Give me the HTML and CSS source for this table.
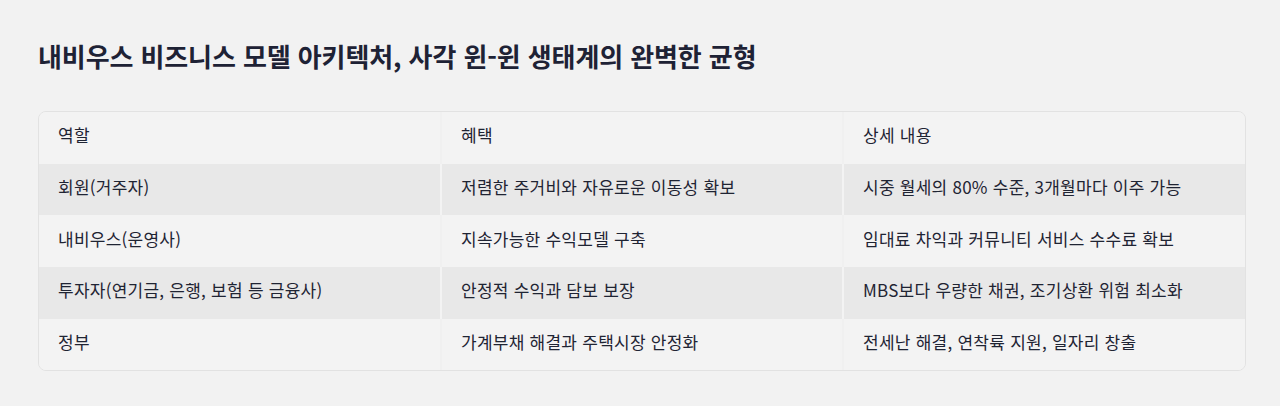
FILE: index.html
```html
<!DOCTYPE html>
<html lang="ko">
<head>
<meta charset="utf-8">
<link rel="stylesheet" href="styles.css">
</head>
<body>
<main class="page">
  <h1 class="title">내비우스 비즈니스 모델 아키텍처, 사각 윈-윈 생태계의 완벽한 균형</h1>
  <div class="table-wrap">
    <table class="grid">
      <thead>
        <tr><th>역할</th><th>혜택</th><th>상세 내용</th></tr>
      </thead>
      <tbody>
        <tr><td>회원(거주자)</td><td>저렴한 주거비와 자유로운 이동성 확보</td><td>시중 월세의 80% 수준, 3개월마다 이주 가능</td></tr>
        <tr><td>내비우스(운영사)</td><td>지속가능한 수익모델 구축</td><td>임대료 차익과 커뮤니티 서비스 수수료 확보</td></tr>
        <tr><td>투자자(연기금, 은행, 보험 등 금융사)</td><td>안정적 수익과 담보 보장</td><td>MBS보다 우량한 채권, 조기상환 위험 최소화</td></tr>
        <tr><td>정부</td><td>가계부채 해결과 주택시장 안정화</td><td>전세난 해결, 연착륙 지원, 일자리 창출</td></tr>
      </tbody>
    </table>
  </div>
</main>
</body>
</html>
```

FILE: styles.css
```css
html, body {
  margin: 0;
  padding: 0;
  background: #f2f2f2;
}
body {
  font-family: "Noto Sans CJK KR", "Noto Sans", sans-serif;
  color: #1f2433;
}
.page {
  padding: 36px 34px 0 38px;
}
.title {
  margin: 0 0 35px 0;
  font-size: 26px;
  line-height: 40px;
  font-weight: 700;
  color: #1e2235;
  letter-spacing: -0.1px;
}
.table-wrap {
  border: 1px solid #e2e2e2;
  border-radius: 8px;
  overflow: hidden;
  width: 1206px;
}
.grid {
  width: 100%;
  border-collapse: collapse;
  table-layout: fixed;
}
.grid th, .grid td {
  text-align: left;
  font-weight: 400;
  font-size: 17px;
  line-height: 24px;
  letter-spacing: 0.25px;
  padding: 11px 19px 16px 19px;
  height: 24.7px;
  border-right: 2px solid #f3f3f3;
}
.grid th:last-child, .grid td:last-child {
  border-right: none;
}
.grid th {
  background: #f3f3f3;
  border-right-color: #f0f0f0;
}
.grid tbody tr:nth-child(odd) td {
  background: #e8e8e8;
}
.grid tbody tr:nth-child(even) td {
  background: #f3f3f3;
  border-right-color: #f0f0f0;
}
```
